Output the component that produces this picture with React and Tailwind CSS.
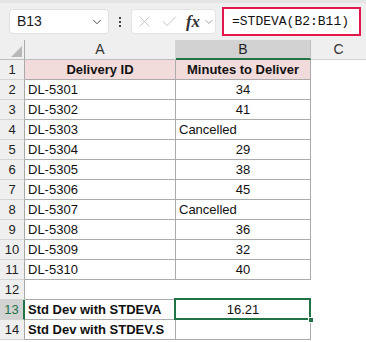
import { ChevronDown, X, Check } from "lucide-react";

const rows = [
  ["DL-5301", "34"],
  ["DL-5302", "41"],
  ["DL-5303", "Cancelled"],
  ["DL-5304", "29"],
  ["DL-5305", "38"],
  ["DL-5306", "45"],
  ["DL-5307", "Cancelled"],
  ["DL-5308", "36"],
  ["DL-5309", "32"],
  ["DL-5310", "40"],
];

function RowHead({ n, active }) {
  return (
    <div
      className={
        active
          ? "w-[25px] h-full flex items-center justify-center bg-[#d2d2d2] text-[#217346] border-r-2 border-r-[#217346] border-b border-b-[#d4d4d4]"
          : "w-[25px] h-full flex items-center justify-center bg-[#efefef] text-[#222] border-r border-r-[#a8a8a8] border-b border-b-[#d4d4d4]"
      }
    >
      {n}
    </div>
  );
}

function Row({ n, children, active }) {
  return (
    <div className="flex h-[20px] text-[13px]">
      <RowHead n={n} active={active} />
      {children}
    </div>
  );
}

export default function App() {
  return (
    <div className="w-[366px] h-[342px] overflow-hidden bg-white font-['Liberation_Sans',Arial,sans-serif] text-[#111]">
      {/* formula bar */}
      <div className="h-[40px] bg-[#efefef] border-t-[3px] border-[#e4e4e4] flex items-center pl-[9px] pr-[5px]">
        <div className="w-[100px] h-[25px] bg-white rounded-[4px] border border-[#e0e0e0] flex items-center justify-between pl-[7px] pr-[4px] text-[14px] text-[#1a1a1a]">
          <span>B13</span>
          <ChevronDown size={14} strokeWidth={1.6} className="text-[#444]" />
        </div>
        <div className="w-[22px] flex flex-col items-center gap-[2px]">
          <span className="w-[2px] h-[2px] bg-[#444]" />
          <span className="w-[2px] h-[2px] bg-[#444]" />
          <span className="w-[2px] h-[2px] bg-[#444]" />
        </div>
        <div className="w-[85px] h-[25px] bg-white rounded-[4px] border border-[#e4e4e4] flex items-center pl-[3px] gap-[3px]">
          <X size={19} strokeWidth={1.1} className="text-[#bdbdbd]" />
          <Check size={19} strokeWidth={1.1} className="text-[#bdbdbd] ml-[3px]" />
          <span className="ml-[4px] font-['Liberation_Serif',serif] italic font-bold text-[17px] leading-none text-[#333]">fx</span>
          <ChevronDown size={12} strokeWidth={1.4} className="text-[#777]" />
        </div>
        <div className="ml-[6px] w-[139px] h-[29px] bg-white border-2 border-[#e3174c] flex items-center pl-[8px] font-['Liberation_Mono',monospace] text-[13px] text-[#111]">
          =STDEVA(B2:B11)
        </div>
      </div>

      {/* column headers */}
      <div className="flex h-[20px] text-[14px] text-[#333]">
        <div className="w-[25px] h-full bg-[#efefef] border-r border-r-[#a8a8a8] border-b border-b-[#bdbdbd] relative">
          <div className="absolute right-[2px] bottom-[2px] w-0 h-0 border-l-[11px] border-l-transparent border-b-[11px] border-b-[#b8b8b8]" />
        </div>
        <div className="w-[151px] h-full bg-[#efefef] border-r border-r-[#d4d4d4] border-b border-b-[#bdbdbd] flex items-center justify-center">A</div>
        <div className="w-[135px] h-full bg-[#d2d2d2] border-r border-r-[#bdbdbd] border-b-2 border-b-[#217346] flex items-center justify-center text-[#222]">B</div>
        <div className="flex-1 h-full bg-[#efefef] border-b border-b-[#d4d4d4] flex items-center justify-center">C</div>
      </div>

      <Row n={1}>
        <div className="w-[151px] h-full bg-[#f2dcdb] border-r border-b border-[#ababab] flex items-center justify-center font-bold">Delivery ID</div>
        <div className="w-[135px] h-full bg-[#f2dcdb] border-r border-b border-[#ababab] flex items-center justify-center font-bold">Minutes to Deliver</div>
      </Row>

      {rows.map(([id, v], i) => (
        <Row n={i + 2} key={id}>
          <div className="w-[151px] h-full border-r border-b border-[#ababab] flex items-center pl-[3px]">{id}</div>
          <div
            className={
              v === "Cancelled"
                ? "w-[135px] h-full border-r border-b border-[#ababab] flex items-center pl-[3px]"
                : "w-[135px] h-full border-r border-b border-[#ababab] flex items-center justify-center"
            }
          >
            {v}
          </div>
        </Row>
      ))}

      <Row n={12}>
        <div className="w-[151px] h-full border-b border-[#ababab]" />
        <div className="w-[135px] h-full border-b border-[#ababab]" />
      </Row>

      <Row n={13} active>
        <div className="w-[151px] h-full border-r border-b border-[#ababab] flex items-center pl-[3px] font-bold">Std Dev with STDEVA</div>
        <div className="w-[135px] h-full border-r border-b border-[#ababab] flex items-center justify-center relative">
          16.21
          <div className="absolute -left-[2px] -top-[2px] w-[137px] h-[22px] border-2 border-[#217346]" />
          <div className="absolute -right-[4px] -bottom-[4px] w-[6px] h-[6px] bg-[#217346] border border-white" />
        </div>
      </Row>

      <Row n={14}>
        <div className="w-[151px] h-full border-r border-b border-[#ababab] flex items-center pl-[3px] font-bold">Std Dev with STDEV.S</div>
        <div className="w-[135px] h-full border-r border-b border-[#ababab]" />
      </Row>
    </div>
  );
}
